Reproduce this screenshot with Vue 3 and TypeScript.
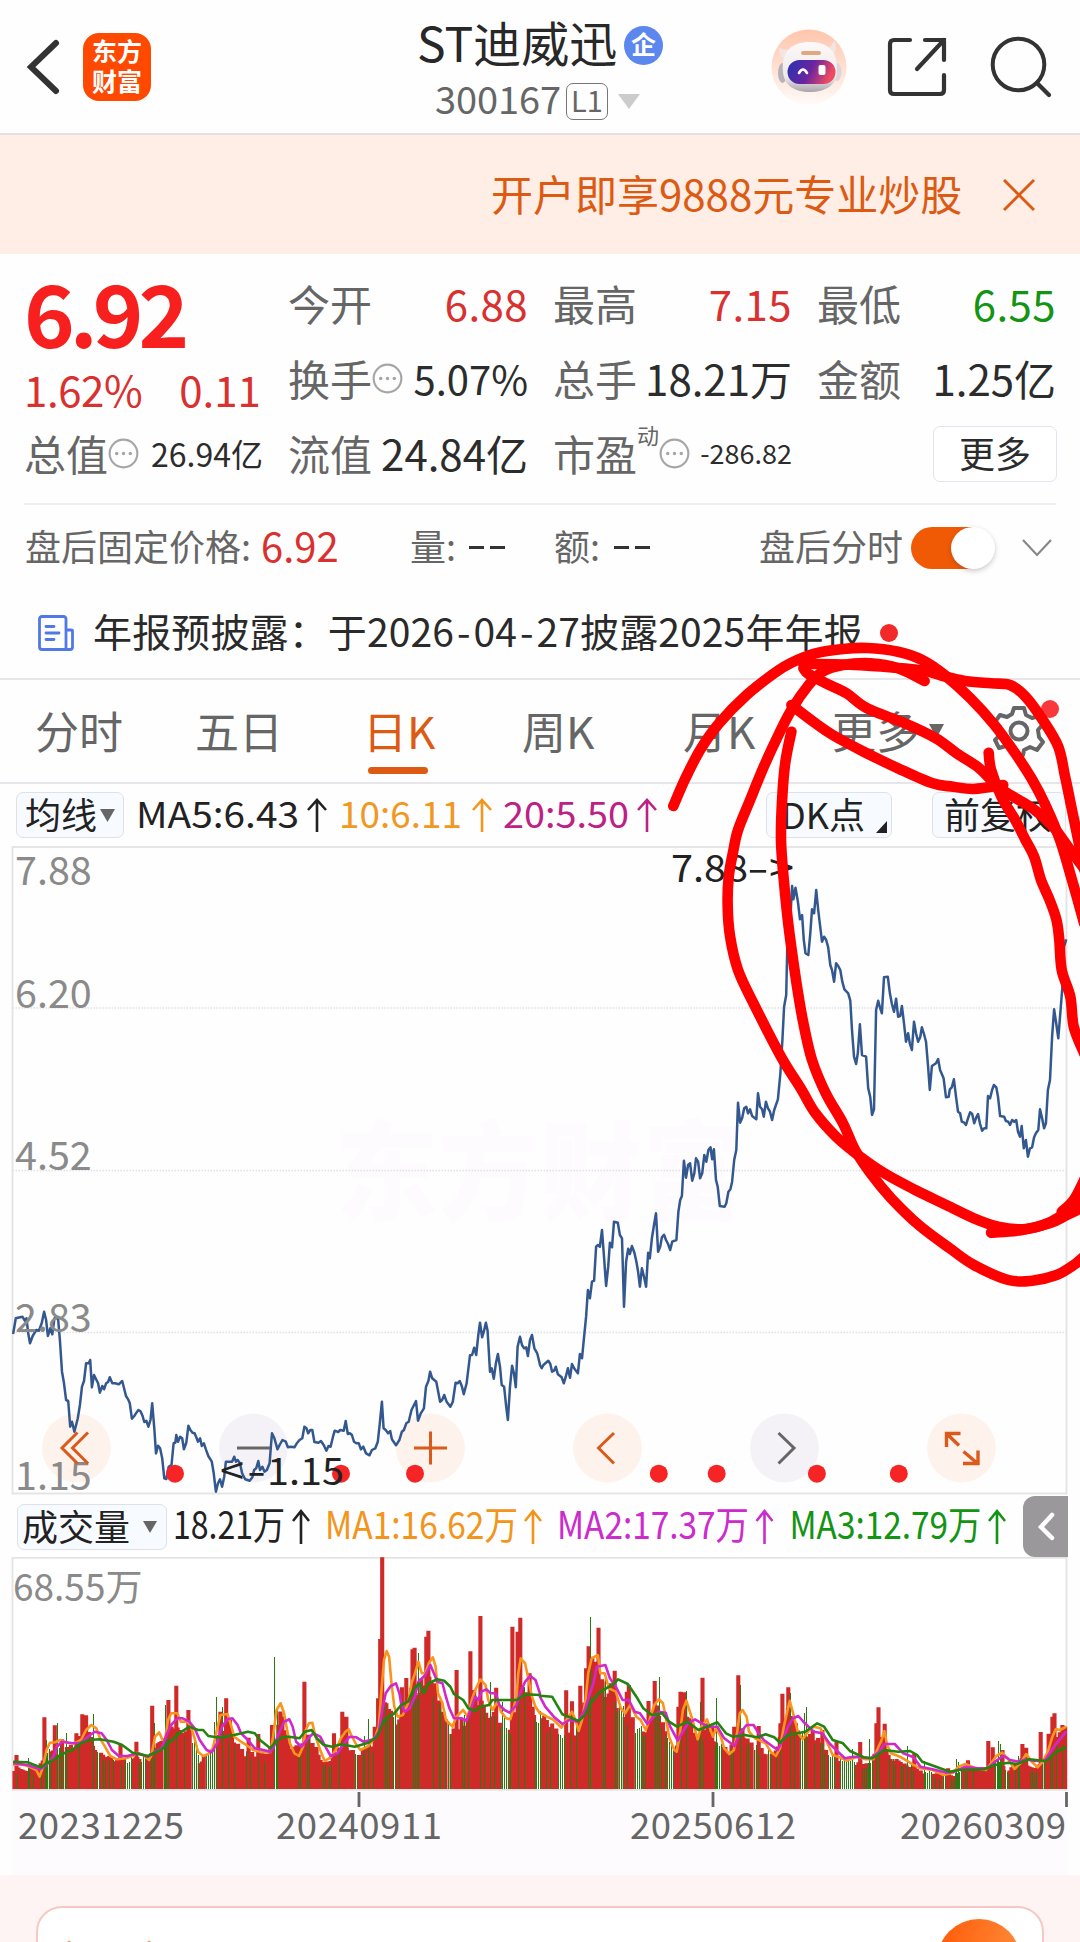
<script setup lang="ts">
type Pt = [number, number]

// Traces are stored in sampling units: 2.904 per pixel across, 3 per pixel down.
const UX = 2.904
const UY = 3

function trace(src: string, ox: number, oy: number): Pt[] {
  return src.trim().split(/\s+/).map((p) => {
    const [x, y] = p.split(',').map(Number)
    return [ox + x / UX, oy + y / UY] as Pt
  })
}
const poly = (pts: Pt[]) => pts.map(([x, y]) => `${x.toFixed(1)},${y.toFixed(1)}`).join(' ')

function smooth(p: Pt[]): string {
  let d = `M${p[0][0].toFixed(1)} ${p[0][1].toFixed(1)}`
  for (let i = 0; i < p.length - 1; i++) {
    const a = p[Math.max(0, i - 1)], b = p[i], c = p[i + 1], e = p[Math.min(p.length - 1, i + 2)]
    const n = [b[0] + (c[0] - a[0]) / 6, b[1] + (c[1] - a[1]) / 6, c[0] - (e[0] - b[0]) / 6, c[1] - (e[1] - b[1]) / 6, c[0], c[1]]
    d += 'C' + n.map((v) => v.toFixed(1)).join(' ')
  }
  return d
}

const P1 = '38,702 46,655 65,650 72,662 77,655 82,700 87,730 95,708 105,690 113,692 121,670 128,635 134,660 139,708 146,685 152,703 158,655 163,650 169,660 174,720 180,815 186,850 192,900 198,903 204,980 209,965 216,995 226,955 232,915 238,860 244,843 250,790 258,790 262,780 267,862 273,825 279,838 285,850 290,878 297,858 302,868 308,850 314,846 319,832 326,850 334,850 345,853 355,843 361,868 366,888 372,898 377,910 383,956 390,948 396,938 402,930 408,934 414,948 419,966 425,962 431,980 437,960 442,910 448,985 453,1060 459,1037 465,1045 471,1075 477,1135 483,1137 490,1100 498,1095 504,1030 509,1028 512,1005 517,1025 523,1010 529,1015 534,1048 541,1028 547,977 553,990 559,998 565,1000 570,1012 575,1025 581,1015 586,1038 592,1030 598,1048 605,1068 615,1085 620,1115 627,1175 633,1150 639,1138 645,1160 651,1130 656,1085 663,1085 674,1085 680,1070 685,1085 690,1080 697,1090 703,1120 712,1138 725,1142 733,1132 738,1110 744,1105 750,1083 755,1110 762,1100 768,1115 775,1110 783,1090 787,1035 790,1000 797,1015 806,1048 812,1035 820,1020 830,1025 836,1042 845,1040 855,1042 862,1030 870,1020 878,1015 884,980 890,985 895,1000 901,990 907,990 913,1026 925,1028 932,1023 940,1035 948,1052 954,1038 960,1040 967,1010 972,992 982,996 988,990 998,992 1004,963 1010,1002 1016,1000 1022,1005 1028,1025 1035,1030 1042,1030 1048,1048 1055,1040 1063,1060 1073,1066 1080,1050 1090,1045 1097,1025 1103,970 1109,905 1114,985 1120,990 1127,1000 1133,993 1138,1018 1150,1036 1160,1020 1167,995 1173,990 1180,970 1187,965 1195,930 1208,903 1214,962 1222,940 1231,925 1237,860 1244,843 1249,815 1255,835 1267,845 1278,905 1284,900 1290,885 1297,905 1308,920 1315,905 1323,848 1329,850 1335,843 1341,858 1347,883 1355,850 1365,766 1371,765 1377,743 1383,765 1389,705 1394,668 1400,712 1405,695 1411,668 1416,692 1423,815 1428,805 1434,836 1440,790 1446,762 1452,800 1457,855 1464,860 1470,920 1475,960 1481,860 1487,797 1493,822 1498,862 1503,740 1510,710 1516,735 1522,745 1528,742 1533,768 1539,720 1545,705 1552,745 1560,760 1566,785'
const P2 = '0,645 5,655 10,645 24,632 30,642 35,665 41,662 46,650 52,673 63,682 69,700 75,680 81,655 87,683 93,642 99,655 110,670 116,612 122,625 128,560 134,500 139,420 145,445 151,395 157,392 163,290 168,285 174,290 180,240 186,320 192,408 198,350 203,278 209,292 215,215 226,218 232,255 238,265 244,470 250,335 256,296 261,312 267,288 274,308 280,335 285,365 290,410 296,355 302,380 308,410 314,308 319,325 325,265 331,225 337,190 343,305 349,290 354,262 360,254 366,270 372,282 378,300 384,275 396,270 402,185 407,150 412,138'
const P3 = '418,962 424,1013 430,975 436,970 442,1022 448,1000 453,955 459,965 465,1015 471,1000 477,945 483,965 489,930 495,922 500,958 505,928 511,1020 516,1040 522,1098 536,1100 541,1090 547,1055 553,1048 558,1025 564,960 570,930 575,788 581,848 587,835 593,805 599,800 604,820 610,808 616,828 628,838 633,760 639,800 645,808 650,830 656,785 662,805 668,815 674,840 680,810 691,778 698,700 704,600 709,500 715,465 718,330 724,240 728,215 732,138 736,178 742,143 749,185 755,238 761,225 766,300 771,340 779,345 785,280 790,208 796,220 802,150 808,210 819,305 825,290 831,300 837,322 843,375 848,390 854,425 860,370 866,378 872,390 878,425 884,448 895,460 901,482 906,570 912,650 918,672 923,640 929,553 935,645 947,650 953,745 959,770 964,825 970,808 976,510 982,482 987,502 993,520 999,412 1010,410 1016,460 1022,492 1028,515 1034,476 1040,530 1046,528 1051,498 1057,550 1063,605 1069,580 1074,610 1080,630 1086,545 1092,580 1098,605 1104,592 1109,562 1115,582 1121,605 1127,680 1132,750 1138,678 1150,670 1156,657 1162,690 1172,715 1179,772 1187,770 1190,748 1196,742 1202,718 1208,770 1214,815 1220,820 1225,845 1232,848 1237,855 1243,835 1249,817 1255,822 1261,850 1267,832 1272,822 1278,852 1284,872 1290,865 1296,865 1301,768 1307,775 1313,750 1318,735 1325,742 1330,770 1336,828 1348,830 1353,843 1360,845 1365,855 1371,840 1377,845 1383,840 1388,875 1394,890 1399,858 1405,925 1411,900 1417,950 1423,925 1429,922 1435,892 1440,880 1447,870 1452,808 1458,835 1464,865 1469,850 1475,750 1481,720 1487,590 1493,508 1499,550 1505,595 1511,520 1517,440 1522,320 1528,298'
const pricePoints = poly([...trace(P1, 0, 1100), ...trace(P2, 540, 1150), ...trace(P3, 540, 840)])

const vol = (l: string, r: string) => [...trace(l, 0, 1550), ...trace(r, 540, 1550)]

const ma1 = poly(vol(
  '38,645 60,643 80,648 95,655 105,660 115,680 125,650 135,600 145,578 160,577 175,570 195,578 215,580 235,570 250,540 265,525 280,535 290,565 305,590 320,618 340,628 365,625 385,618 400,608 420,618 433,630 440,615 450,560 462,547 472,570 480,565 488,510 497,490 515,490 525,515 545,515 555,530 565,565 575,605 590,618 605,612 618,595 630,540 640,495 660,492 668,515 680,560 700,575 715,585 735,600 755,605 785,607 793,560 803,480 815,460 825,490 830,520 842,580 855,610 868,618 880,590 888,540 897,520 907,518 915,555 930,600 943,633 960,622 975,600 990,565 1003,545 1013,538 1020,555 1035,585 1047,600 1070,588 1090,560 1100,530 1107,430 1115,330 1123,303 1130,320 1137,400 1145,470 1155,500 1170,495 1185,460 1195,400 1205,370 1215,335 1225,370 1235,370 1245,340 1257,322 1265,350 1272,430 1285,460 1295,510 1314,530 1325,500 1345,480 1358,500 1370,450 1380,420 1395,388 1410,405 1418,450 1430,480 1445,455 1455,485 1470,505 1482,508 1490,480 1500,440 1505,370 1512,325 1525,340 1535,390 1545,440 1555,470 1568,490',
  '0,488 20,500 40,510 62,533 80,505 93,485 103,510 112,543 122,510 132,450 140,370 150,325 168,315 175,370 188,370 200,415 220,425 235,475 247,490 262,465 280,500 292,510 307,540 318,510 332,465 345,448 357,460 365,500 375,560 390,600 397,605 405,560 415,480 425,452 440,500 458,568 468,530 485,508 502,560 512,535 525,560 535,595 550,612 563,600 572,550 580,490 588,480 600,500 607,545 625,565 655,580 670,605 685,618 697,595 708,530 725,452 735,490 750,550 763,568 778,545 795,530 815,535 835,580 850,615 870,622 890,632 920,620 945,628 968,628 983,590 992,570 1000,543 1008,585 1020,610 1045,620 1065,632 1085,645 1105,655 1140,660 1172,675 1200,668 1215,650 1235,642 1265,655 1295,660 1310,640 1325,618 1342,608 1358,625 1378,657 1395,640 1412,612 1428,635 1445,652 1460,635 1475,605 1488,560 1498,537 1510,540 1528,530'))
const ma2 = poly(vol(
  '38,640 80,645 115,658 135,645 155,620 165,590 180,575 210,580 235,578 255,560 275,545 295,550 310,570 325,600 345,618 370,618 400,610 430,620 450,605 470,595 485,550 497,525 515,505 530,505 550,515 565,535 580,570 600,600 615,607 630,580 645,530 660,508 675,505 690,525 700,550 720,570 740,595 765,600 785,605 795,590 810,550 825,515 840,508 850,530 860,575 875,590 895,565 910,550 930,560 945,590 960,618 980,610 1000,580 1015,560 1035,562 1055,575 1085,568 1100,545 1110,480 1120,430 1135,408 1150,400 1160,430 1165,460 1175,485 1190,475 1205,440 1215,395 1235,375 1250,345 1262,375 1270,395 1285,400 1295,440 1305,475 1318,505 1340,505 1355,512 1368,475 1380,440 1390,450 1398,425 1412,418 1425,430 1440,430 1450,465 1465,480 1480,488 1500,465 1510,430 1525,395 1540,378 1555,390 1568,430',
  '0,440 15,470 40,500 65,522 85,510 110,515 130,480 145,430 155,400 165,350 190,345 203,385 220,410 240,450 258,450 275,485 290,490 312,522 330,500 345,485 365,488 378,530 400,572 418,540 430,520 450,508 470,520 490,530 515,530 535,565 565,588 580,550 600,525 620,525 635,550 650,570 690,600 705,570 720,530 735,505 750,498 765,515 780,530 795,545 820,550 840,580 860,600 885,625 910,620 960,625 985,605 1000,582 1030,582 1055,610 1085,622 1105,650 1140,658 1180,668 1205,665 1235,650 1270,655 1300,655 1325,632 1345,617 1365,630 1390,635 1412,628 1435,633 1465,632 1480,610 1500,580 1528,545'))
const ma3 = poly(vol(
  '38,635 80,637 100,645 118,652 135,640 155,630 180,612 210,600 235,580 260,570 290,568 330,575 355,585 385,608 430,618 470,598 500,570 520,550 550,530 575,540 590,540 605,558 640,563 680,555 720,545 740,550 755,570 785,595 800,575 820,562 840,560 870,565 885,545 905,540 920,565 940,585 965,590 990,583 1030,590 1070,578 1095,560 1115,510 1145,490 1165,465 1185,455 1200,420 1217,400 1230,430 1245,400 1270,388 1290,392 1308,410 1318,432 1345,450 1360,475 1380,483 1395,470 1420,465 1430,450 1480,450 1500,450 1525,433 1568,435',
  '0,437 35,440 52,470 65,493 112,513 130,495 150,455 175,425 210,405 227,388 255,402 280,440 300,475 325,495 355,490 375,515 398,530 428,515 460,540 490,528 515,517 540,550 560,560 595,555 630,562 655,553 680,562 697,578 720,555 770,545 805,520 825,530 850,570 880,580 900,603 940,622 965,625 1000,600 1040,605 1075,603 1095,615 1110,635 1150,650 1190,665 1215,660 1290,658 1320,645 1360,638 1385,642 1420,628 1470,633 1500,605 1528,592'))

const envelope = vol(
  '0,650 80,655 115,650 130,600 200,590 250,540 290,600 330,630 420,620 450,590 500,520 550,540 580,630 610,600 650,520 700,600 740,610 780,610 815,490 850,600 900,550 940,640 990,590 1040,610 1090,570 1110,450 1130,480 1160,490 1200,400 1240,360 1270,440 1310,540 1350,500 1390,430 1420,490 1460,500 1480,540 1510,400 1550,470',
  '20,510 60,545 100,530 130,430 160,340 180,400 220,440 260,500 300,540 340,470 370,560 395,600 420,470 460,560 480,530 520,580 550,600 580,540 620,580 680,610 720,470 760,550 800,550 840,610 900,630 960,635 990,560 1020,620 1060,640 1100,660 1160,670 1200,675 1240,645 1290,665 1320,620 1360,660 1400,620 1440,655 1480,600 1500,560 1540,530')
const redSpikes = vol(
  '48,615 129,502 159,526 180,568 222,550 239,493 250,496 350,585 396,575 442,467 489,450 512,407 547,480 640,485 657,445 668,510 722,563 750,552 790,525 815,490 884,395 970,550 994,485 1006,500 1088,530 1098,445 1104,267 1110,22 1122,460 1167,412 1180,384 1198,298 1204,293 1238,260 1244,242 1262,400 1326,360 1366,304 1377,420 1395,198 1412,488 1441,413 1488,230 1503,245 1511,203 1538,370 1547,470',
  '20,510 76,421 93,454 117,407 134,355 141,289 152,320 163,335 170,233 181,388 217,362 205,400 252,425 258,405 315,453 333,393 402,470 408,425 420,427 472,383 436,548 487,520 500,530 564,530 576,376 588,535 635,528 704,431 698,520 721,412 733,500 792,540 820,540 861,575 930,576 983,472 977,520 1001,521 1087,610 1185,655 1243,631 1302,573 1315,592 1343,600 1401,582 1412,593 1454,546 1477,551 1488,500 1494,490 1517,525 1525,530')
const greenSpikes = vol(
  '82,625 134,570 165,520 193,548 269,492 448,520 478,465 628,440 622,515 646,470 797,320 803,470 1058,558 1070,507 1215,310 1279,478 1424,395 1458,455',
  '146,200 345,381 425,423 512,445 466,455 582,405 773,470 768,490 727,430 954,568 1065,588 907,598 1116,632 1209,627 1215,635 1331,573 1337,583 1389,617 190,370')
// Runs of falling days, where only the thin green bars show.
const fallRuns: Pt[] = [
  ...[[82, 87], [136, 140], [172, 192], [282, 288], [327, 331], [361, 384], [408, 422], [476, 480], [554, 578], [598, 628], [711, 714], [796, 802], [940, 945], [1031, 1039], [1143, 1149], [1257, 1261], [1298, 1308], [1346, 1350], [1420, 1425], [1456, 1478], [1518, 1523], [1553, 1568]].map(([a, b]) => [a / UX, b / UX] as Pt),
  ...[[0, 3], [29, 33], [50, 70], [104, 109], [230, 244], [272, 292], [303, 306], [368, 390], [460, 464], [516, 528], [618, 630], [662, 670], [753, 768], [812, 820], [836, 856], [868, 916], [950, 964], [1020, 1028], [1050, 1054], [1073, 1080], [1118, 1134], [1170, 1178], [1206, 1226], [1255, 1259], [1323, 1340], [1353, 1358], [1389, 1394], [1458, 1463]].map(([a, b]) => [540 + a / UX, 540 + b / UX] as Pt),
]

const BASE = 1789
let seed = 11
const rnd = () => ((seed = (seed * 16807) % 2147483647) / 2147483647)
function topAt(x: number): number {
  for (let i = 1; i < envelope.length; i++) {
    const a = envelope[i - 1], b = envelope[i]
    if (x <= b[0]) return a[1] + ((b[1] - a[1]) * (x - a[0])) / (b[0] - a[0])
  }
  return envelope[envelope.length - 1][1]
}
const reds: Pt[] = []
const greens: Pt[] = []
for (let x = 14.5; x < 1065; x += 2.014) {
  const h = BASE - topAt(x)
  const y = BASE - h * (0.84 + rnd() * 0.2)
  const falling = fallRuns.some(([a, b]) => x >= a - 0.6 && x <= b + 0.6)
  if (falling) greens.push([x, y])
  else {
    reds.push([x, y])
    if (rnd() < 0.26) greens.push([x, y + 4])
  }
}
const redPath = [...reds, ...redSpikes].map(([x, y]) => `M${x.toFixed(1)} ${BASE}V${y.toFixed(1)}`).join('')
const greenPath = [...greens, ...greenSpikes].map(([x, y]) => `M${Math.round(x) + 0.5} ${BASE}V${y.toFixed(1)}`).join('')

const pen = [
  '387,948 420,870 465,780 520,700 600,615 680,550 730,518 800,490 880,477 950,474 1040,485 1110,510 1175,555 1250,625 1320,705 1380,790 1430,870 1470,950 1510,1050 1545,1170 1580,1300',
  '1117,573 1040,535 960,520 880,525 820,545 780,585 730,660 690,740 650,830 610,930 575,1020 560,1090 548,1160 545,1250 552,1340 575,1440 620,1540 700,1700 760,1800 800,1870 860,1940 930,2000 1000,2050 1090,2100 1180,2145 1260,2185 1330,2210 1400,2218 1460,2205 1510,2180 1545,2145 1585,2080',
  '730,725 712,820 703,930 700,1050 708,1170 722,1310 745,1480 765,1600 790,1710 830,1810 880,1900 915,1980 960,2050 1020,2125 1100,2205 1190,2275 1260,2325 1360,2370 1430,2372 1500,2355 1550,2325 1590,2290',
  '765,522 900,524 1100,540 1170,558 1230,572 1310,580 1365,585 1410,620 1460,690 1505,770 1525,860 1545,960 1565,1060 1590,1180',
  '765,535 780,552 830,580 890,610 950,655 1060,700 1150,745 1210,790 1270,830 1310,870 1350,905 1430,955 1490,1010 1540,1080 1590,1150',
  '730,645 800,700 850,735 940,785 1040,835 1140,880 1200,890 1260,897 1345,885',
  '1303,788 1310,840 1340,920 1380,990 1410,1050 1435,1100 1455,1170 1480,1230 1500,1290 1508,1350 1515,1440 1540,1520 1550,1610 1580,1690',
  '1310,2228 1400,2220 1480,2200 1530,2175 1590,2145',
  '1515,2165 1550,2130 1585,2060',
].map((s) => smooth(trace(s, 540, 490)))

const controls = [76.4, 253.4, 430.4, 607.5, 784.5, 961.5]
const marks = [175, 341, 415, 658.8, 716.7, 816.9, 898.8]
const dates: [string, number][] = [['20231225', 18], ['20240911', 276], ['20250612', 630], ['20260309', 900]]
const volumeLegend = [
  { text: '18.21万', x: 173, w: 112, ax: 301, color: '#222' },
  { text: 'MA1:16.62万', x: 325, w: 193, ax: 533, color: '#f3941b' },
  { text: 'MA2:17.37万', x: 557, w: 192, ax: 764.5, color: '#cb2ccb' },
  { text: 'MA3:12.79万', x: 789.5, w: 192, ax: 997, color: '#149414' },
]
const maLegend = [
  { text: 'MA5:6.43', x: 136, w: 163, ax: 317, color: '#222' },
  { text: '10:6.11', x: 339, w: 123, ax: 482, color: '#f0981f' },
  { text: '20:5.50', x: 503, w: 126, ax: 647, color: '#bd2186' },
]
</script>

<template>
  <div class="page">
    <header class="header">
      <div class="head-left">
        <svg class="back" width="36" height="60" viewBox="0 0 36 60"><path d="M31 6 6 30 31 54" fill="none" stroke="#333" stroke-width="6" stroke-linecap="round" /></svg>
        <div class="brand"><span>东方</span><span>财富</span></div>
      </div>
      <div class="head-mid">
        <div class="title"><span>ST迪威迅</span><i class="corp">企</i></div>
        <div class="code"><span>300167</span><b class="level">L1</b><svg width="22" height="15"><path d="M0 0H22L11 15Z" fill="#ccc" /></svg></div>
      </div>
      <div class="head-right">
        <svg width="76" height="76" viewBox="0 0 76 76">
          <defs>
            <linearGradient id="halo" x2="0" y2="1"><stop offset="0" stop-color="#ffc5ac" /><stop offset="1" stop-color="#fffaf8" /></linearGradient>
            <linearGradient id="visor" x2="1" y2=".25"><stop offset="0" stop-color="#2733b4" /><stop offset=".55" stop-color="#6a249f" /><stop offset="1" stop-color="#ee4b63" /></linearGradient>
            <linearGradient id="shell" x2="0" y2="1"><stop offset="0" stop-color="#fdf9f8" /><stop offset=".7" stop-color="#eeeaec" /><stop offset="1" stop-color="#aaa5ac" /></linearGradient>
          </defs>
          <circle cx="38" cy="38" r="37.500" fill="url(#halo)" />
          <path d="M8 19q0 9 7 13l10-13q-10 4-17 0zM63 11q4 7 0 14l-8-6q7-1 8-8z" fill="#f1e6e4" />
          <ellipse cx="11.500" cy="44" rx="4.500" ry="10" fill="#b7b1b8" /><ellipse cx="66" cy="43" rx="4.500" ry="9" fill="#ddd5d9" />
          <path d="M12 43C10 22 21 13 39 13s28 9 27 30c-.5 13-11 20-27 20S13 56 12 43Z" fill="url(#shell)" />
          <rect x="30" y="22" width="20" height="4" rx="2" fill="#dfa880" />
          <rect x="16.500" y="31" width="48" height="24" rx="12" fill="url(#visor)" />
          <path d="M28 44q4-7 8 0" fill="none" stroke="#fff" stroke-width="2.600" stroke-linecap="round" /><rect x="47.500" y="36" width="7" height="10" rx="2" fill="#fff" />
        </svg>
        <svg width="60" height="60" viewBox="0 0 60 60"><path d="M23 3H7Q3 3 3 7V53Q3 57 7 57H53Q57 57 57 53V38M38 3H57V23M57 3 30 32" fill="none" stroke="#333" stroke-width="4.200" stroke-linecap="round" /></svg>
        <svg width="62" height="62" viewBox="0 0 62 62"><circle cx="28.500" cy="28.500" r="25.800" fill="none" stroke="#333" stroke-width="4" /><path d="M47 47 59 59" stroke="#333" stroke-width="4.200" stroke-linecap="round" /></svg>
      </div>
    </header>

    <div class="banner">
      <span>开户即享9888元专业炒股</span>
      <svg width="32" height="34" viewBox="0 0 32 34"><path d="M1 2 31 32M31 2 1 32" stroke="#dc5a12" stroke-width="3" /></svg>
    </div>

    <section class="quote">
      <div class="col">
        <div class="price">6.92</div>
        <div class="change"><span>1.62%</span><span>0.11</span></div>
        <div class="cell"><label>总值</label><svg class="dots" viewBox="0 0 32 32"><circle cx="16" cy="16" r="14.300" /><path d="M9 16h.01M16 16h.01M23 16h.01" /></svg><span class="sm">26.94亿</span></div>
      </div>
      <div class="col">
        <div class="cell"><label>今开</label><span class="up">6.88</span></div>
        <div class="cell"><label>换手</label><svg class="dots" viewBox="0 0 32 32"><circle cx="16" cy="16" r="14.300" /><path d="M9 16h.01M16 16h.01M23 16h.01" /></svg><span class="pct">5.07%</span></div>
        <div class="cell"><label>流值</label><span>24.84亿</span></div>
      </div>
      <div class="col">
        <div class="cell"><label>最高</label><span class="up">7.15</span></div>
        <div class="cell"><label>总手</label><span>18.21万</span></div>
        <div class="cell"><label>市盈</label><sup>动</sup><svg class="dots" viewBox="0 0 32 32"><circle cx="16" cy="16" r="14.300" /><path d="M9 16h.01M16 16h.01M23 16h.01" /></svg><span class="xs">-286.82</span></div>
      </div>
      <div class="col">
        <div class="cell"><label>最低</label><span class="down">6.55</span></div>
        <div class="cell"><label>金额</label><span>1.25亿</span></div>
        <div class="cell"><button class="more">更多</button></div>
      </div>
    </section>

    <div class="after">
      <span class="lbl a1">盘后固定价格:</span><span class="fix">6.92</span>
      <span class="lbl a2">量:</span><i class="dash"></i><i class="dash"></i>
      <span class="lbl a3">额:</span><i class="dash"></i><i class="dash"></i>
      <span class="lbl a4">盘后分时</span>
      <div class="toggle"><i></i></div>
      <svg width="32" height="20" viewBox="0 0 32 20"><path d="M2 2 16 17 30 2" fill="none" stroke="#888" stroke-width="2.200" /></svg>
    </div>

    <div class="notice">
      <svg width="36" height="36" viewBox="0 0 36 36" fill="none" stroke="#5078e6" stroke-width="2.800" stroke-linecap="round" stroke-linejoin="round"><path d="M28 34V4Q28 1.500 25.500 1.500H4Q1.500 1.500 1.500 4V32Q1.500 34.500 4 34.500H32Q34.500 34.500 34.500 32V16Q34.500 15 33 15H28M8 11.500h8M8 18h13M8 24.500h8" /></svg>
      <span>年报预披露：于2026<em>-</em>04<em>-</em>27披露2025年年报</span>
      <i class="dot"></i>
    </div>

    <nav class="tabs">
      <span class="t1">分时</span><span class="t2">五日</span><span class="t3 on">日K</span><span class="t4">周K</span><span class="t5">月K</span><span class="t6">更多</span>
      <svg class="tri" width="15" height="14"><path d="M0 0H15L7.500 14Z" fill="#666" /></svg>
      <div class="gear">
        <svg width="54" height="54" viewBox="-27 -27 54 54" fill="none" stroke="#666" stroke-width="4"><path d="M-5-23H5L7-16 13-13 20-15 24-7 19-1 20 6 24 11 18 19 11 16 5 19 4 24H-5L-7 18-13 15-20 17-24 9-18 3-19-4-24-9-19-16-12-14-7-17Z" stroke-linejoin="round" /><circle r="8.500" /></svg>
        <i class="dot"></i>
      </div>
    </nav>

    <div class="legend">
      <div class="chip c1">均线<svg width="15" height="13"><path d="M0 0H15L7.500 13Z" fill="#666" /></svg></div>
      <svg class="legend-text" width="540" height="62" viewBox="130 784 540 62">
        <template v-for="m in maLegend" :key="m.text">
          <text :x="m.x" y="828" :textLength="m.w" lengthAdjust="spacingAndGlyphs" font-size="36" :fill="m.color">{{ m.text }}</text>
          <path :d="`M${m.ax} 832V800M${m.ax - 9} 810 ${m.ax} 800 ${m.ax + 9} 810`" fill="none" :stroke="m.color" stroke-width="2.600" />
        </template>
      </svg>
      <div class="chip c2">DK点<svg width="11" height="12"><path d="M11 0V12H0Z" fill="#222" /></svg></div>
      <div class="chip c3">前复权</div>
    </div>

    <svg class="chart" width="1080" height="650" viewBox="0 846 1080 650">
      <text x="336" y="1212" class="mark" textLength="408" lengthAdjust="spacingAndGlyphs">东方财富</text>
      <path d="M12.500 1008H1066M12.500 1170.500H1066M12.500 1332.500H1066" stroke="#e2dee2" stroke-width="1.300" stroke-dasharray="1.500 1.500" />
      <rect x="12.500" y="847" width="1054" height="646.500" fill="none" stroke="#e3e3e4" stroke-width="1.800" />
      <g v-for="(c, i) in controls" :key="c"><circle :cx="c" cy="1448" r="34.400" :fill="i === 1 || i === 4 ? '#f5f2f7' : '#fef2ed'" /></g>
      <polyline :points="pricePoints" fill="none" stroke="#33588f" stroke-width="2.500" stroke-linejoin="round" />
      <g fill="#8a8a8a" font-size="39.500">
        <text x="15" y="885">7.88</text><text x="15" y="1008">6.20</text><text x="15" y="1170">4.52</text><text x="15" y="1332">2.83</text><text x="15" y="1490">1.15</text>
      </g>
      <g fill="none" stroke="#d95a1b" stroke-width="3">
        <path d="M77.500 1432.500 62 1448 77.500 1463.500M88 1432.500 72.500 1448 88 1463.500M414 1448H447M430.500 1431.500V1464.500M614 1433 598.500 1448 614 1463.500" />
        <path d="M960.500 1433.500H946.500V1447M947 1434 959 1445.500M978 1450.500V1463.500H963M963.500 1451.500 977 1463" stroke-width="3.400" />
      </g>
      <path d="M237 1448H270M778.500 1433 794 1448 778.500 1463.500" fill="none" stroke="#666" stroke-width="3" />
      <circle v-for="m in marks" :key="m" :cx="m" cy="1473.700" r="9" fill="#f62424" />
      <g fill="#222" font-size="38">
        <text x="671" y="882" textLength="77" lengthAdjust="spacingAndGlyphs">7.88</text><text x="747" y="882" textLength="22" lengthAdjust="spacingAndGlyphs">-</text><text x="769" y="882" textLength="25" lengthAdjust="spacingAndGlyphs">&gt;</text>
        <text x="220" y="1485" textLength="24" lengthAdjust="spacingAndGlyphs">&lt;</text><text x="247" y="1485" textLength="19" lengthAdjust="spacingAndGlyphs">-</text><text x="267" y="1485" textLength="77" lengthAdjust="spacingAndGlyphs">1.15</text>
      </g>
    </svg>

    <div class="legend vol-legend">
      <div class="chip c4">成交量<svg width="14" height="12"><path d="M0 0H14L7 12Z" fill="#666" /></svg></div>
      <svg class="legend-text" width="856" height="61" viewBox="167 1496 856 61">
        <template v-for="m in volumeLegend" :key="m.text">
          <text :x="m.x" y="1539" :textLength="m.w" lengthAdjust="spacingAndGlyphs" font-size="38.500" :fill="m.color">{{ m.text }}</text>
          <path :d="`M${m.ax} 1544V1511M${m.ax - 8} 1521 ${m.ax} 1511 ${m.ax + 8} 1521`" fill="none" :stroke="m.color" stroke-width="2.600" />
        </template>
      </svg>
      <div class="fold"><svg width="18" height="30" viewBox="0 0 18 30"><path d="M15 3 4 15 15 26" fill="none" stroke="#fff" stroke-width="4.500" stroke-linecap="round" /></svg></div>
    </div>

    <svg class="chart" width="1080" height="318" viewBox="0 1557 1080 318">
      <rect x="12.500" y="1789" width="1055" height="86" fill="#fdfbfe" />
      <rect x="12.500" y="1557.800" width="1054" height="232" fill="#fff" stroke="#e3e3e4" stroke-width="1.800" />
      <text x="13" y="1601" font-size="37" fill="#8a8a8a">68.55万</text>
      <path :d="redPath" stroke="#d02a28" stroke-width="4.100" fill="none" />
      <path class="fall" :d="greenPath" stroke="#2a7a14" stroke-width="1" fill="none" />
      <g fill="none" stroke-width="2.600" stroke-linejoin="round">
        <polyline :points="ma1" stroke="#f9941c" /><polyline :points="ma2" stroke="#d128cc" /><polyline :points="ma3" stroke="#23840f" />
      </g>
      <path d="M359 1792V1807M713 1792V1807M1066.500 1792V1807" stroke="#666" stroke-width="2.800" />
      <text v-for="d in dates" :key="d[0]" :x="d[1]" y="1839" font-size="36.500" textLength="166" fill="#666">{{ d[0] }}</text>
    </svg>

    <footer class="footer">
      <div class="card"><span>问一问</span><i></i></div>
    </footer>

    <svg class="pen" width="1080" height="1942" viewBox="0 0 1080 1942">
      <path v-for="d in pen" :key="d" :d="d" fill="none" stroke="#fe0000" stroke-width="10.600" stroke-linecap="round" stroke-linejoin="round" />
    </svg>
  </div>
</template>

<style>
html, body { margin: 0; background: #fff; }
</style>

<style scoped>
* { box-sizing: border-box; }
.page { position: relative; width: 1080px; height: 1942px; overflow: hidden; background: #fefefe; font-family: "Noto Sans CJK SC", "Noto Sans", sans-serif; color: #222; }
svg { display: block; flex: none; }
i, em { font-style: normal; }
span, label { white-space: nowrap; }

.header { display: grid; grid-template-columns: 417px 250px 1fr; height: 135px; border-bottom: 2px solid #e4e0e1; }
.head-left { display: flex; align-items: center; padding-left: 25px; }
.brand { display: flex; flex-direction: column; align-items: center; justify-content: center; width: 68px; height: 68px; margin-left: 22px; border-radius: 16px; background: #ff4800; color: #fff; font-size: 25px; font-weight: 700; line-height: 30px; padding-bottom: 4px; }
.title { display: flex; align-items: center; height: 62px; margin-top: 10px; font-size: 48px; line-height: 62px; color: #282828; }
.title span { width: 202px; }
.corp { width: 39px; height: 39px; margin: 8px 0 0 5px; border-radius: 50%; background: #5c87ee; color: #fff; font-size: 25px; font-weight: 700; line-height: 35px; text-align: center; }
.code { display: flex; align-items: center; height: 50px; margin: 4px 0 0 18px; font-size: 38px; line-height: 44px; color: #666; }
.code span { width: 131px; margin-top: -6px; letter-spacing: -.1px; }
.level { width: 42px; height: 37px; margin-right: 10px; border: 1.5px solid #777; border-radius: 7px; font-size: 29px; font-weight: 400; line-height: 30px; text-align: center; }
.head-right { display: flex; align-items: center; padding-left: 104px; }
.head-right svg + svg { margin-left: 40px; }
.head-right svg + svg + svg { margin-left: 43px; }

.banner { display: flex; align-items: center; height: 119px; padding-left: 491px; background: #feeee6; color: #dc5a12; font-size: 42px; line-height: 60px; }
.banner span { width: 512px; margin-top: -4px; }

.quote { display: grid; grid-template-columns: 239px 240px 239px 239px; gap: 25px; height: 251px; margin: 0 24px; padding: 11px 0 0; border-bottom: 2px solid #f0f0f0; }
.price { height: 95px; font-size: 86px; font-weight: 700; line-height: 92px; color: #f8201f; letter-spacing: -5px; }
.change { display: flex; height: 55px; padding-top: 3px; font-size: 42px; line-height: 52px; color: #d93030; letter-spacing: -.4px; }
.change span:last-child { margin-left: 37px; letter-spacing: 0; }
.cell { display: flex; align-items: center; height: 75px; font-size: 42px; line-height: 60px; color: #2c2c2c; }
.cell label { color: #666; }
.cell span { margin-left: auto; }
.dots { width: 31px; height: 31px; margin-top: 1px; fill: none; stroke: #a6a6a6; stroke-width: 2.2; }
.dots path { stroke-width: 3.6; stroke-linecap: round; }
.sm { font-size: 32px; }
.pct { font-size: 40px; }
.xs { font-size: 27px; }
.cell sup { width: 22px; font-size: 22px; line-height: 24px; margin: -38px 0 0 0; color: #666; }
.up { color: #d93030; letter-spacing: .4px; }
.down { color: #149414; letter-spacing: .4px; }
.more { width: 124px; height: 56px; margin: 2px -1px 0 auto; padding: 0 0 4px; border: 1.5px solid #e4e2ec; border-radius: 7px; background: #fff; font: 36px/48px "Noto Sans CJK SC", sans-serif; color: #2c2c2c; }

.after { display: flex; align-items: center; height: 85px; padding-left: 25px; font-size: 36px; line-height: 54px; color: #666; }
.after span { margin-top: -5px; }
.a1 { width: 236px; }
.fix { width: 149px; font-size: 40px; color: #d93030; }
.a2 { width: 59px; }
.a3 { width: 60px; margin-left: 43px; }
.a4 { width: 152px; margin-left: 103px; }
.dash { width: 15px; height: 3px; margin-right: 6px; background: #333; }
.toggle { display: flex; justify-content: flex-end; width: 84px; height: 42px; margin-right: 26px; border-radius: 21px; background: linear-gradient(90deg, #f05a05 62px, #fefefe 62px); }
.toggle i { width: 44px; height: 42px; border-radius: 50%; background: #fff; box-shadow: 0 2px 5px rgba(60, 40, 60, .25); }

.notice { display: flex; align-items: center; height: 90px; padding: 0 0 2px 38px; border-bottom: 2px solid #e6e6ea; font-size: 39px; line-height: 56px; color: #2a2a2a; }
.notice span { margin: -7px 0 0 19px; letter-spacing: .13px; }
.notice em { padding: 0 2.9px; }
.dot { width: 18px; height: 18px; border-radius: 50%; background: #f32828; }
.notice .dot { margin-left: 17px; }

.tabs { display: flex; align-items: center; height: 104px; padding-left: 35px; border-bottom: 2px solid #e6e6ea; font-size: 44px; line-height: 62px; color: #666; }
.tabs span { height: 101px; line-height: 98px; }
.t1 { width: 160px; }
.t2 { width: 168px; }
.t3 { width: 159px; }
.t4 { width: 161px; }
.t5 { width: 149px; }
.t6 { width: 97px; }
.on { color: #dd5a12; }
.on::after { content: ""; display: block; width: 60px; height: 7px; margin: -12px 0 0 5px; border-radius: 4px; background: #dd5a12; }
.gear { position: relative; margin-left: 48px; }
.gear .dot { position: absolute; right: -13px; top: -4px; background: #f8383a; }

.legend { display: flex; align-items: center; height: 62px; padding-left: 16px; }
.legend-text { margin-left: 6px; }
.chip { display: flex; align-items: center; height: 46px; padding-bottom: 4px; border: 1.5px solid #dfe1ea; border-radius: 7px; background: #f7faff; font-size: 36px; line-height: 44px; color: #222; white-space: nowrap; flex: none; }
.c1 { width: 108px; padding-left: 8px; }
.c1 svg { margin: 5px 0 0 3px; }
.c2 { width: 126px; margin-left: 96px; padding-left: 14px; }
.c2 svg { margin: 28px 0 0 11px; }
.c3 { width: 134px; margin-left: 40px; padding-left: 11px; }
.c4 { width: 150px; margin-right: 0; padding-left: 4px; }
.c4 svg { margin: 5px 0 0 13px; }
.vol-legend { height: 61px; padding-left: 17px; }
.vol-legend .legend-text { margin-left: 0; }
.fold { display: flex; align-items: center; justify-content: center; width: 45px; height: 61px; border-radius: 12px 0 0 12px; background: #9b989b; }
.mark { font-size: 108px; font-weight: 900; fill: #fefbfe; }
.fall { shape-rendering: crispEdges; }

.footer { height: 67px; padding: 30.500px 36px 0; background: #fef4f3; }
.card { display: flex; justify-content: space-between; width: 1008px; height: 100px; border: 2.500px solid #f6c8c3; border-radius: 26px; background: #fff; padding: 11px 21px 0 25px; }
.card span { margin-top: 14px; font-size: 40px; line-height: 48px; color: #d99a68; }
.card i { width: 84px; height: 84px; border-radius: 50%; background: linear-gradient(100deg, #fe5a08, #ff8e3c); }

.pen { position: absolute; left: 0; top: 0; pointer-events: none; }
</style>
